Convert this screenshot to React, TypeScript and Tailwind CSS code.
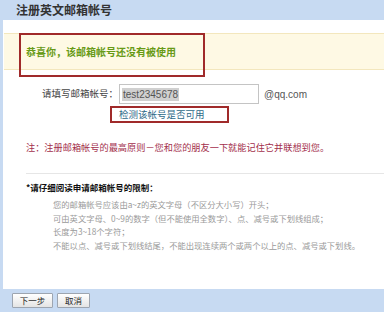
import React from 'react';

const cjk = '"Noto Sans CJK SC", "Liberation Sans", sans-serif';

const rules = [
  '您的邮箱帐号应该由a~z的英文字母（不区分大小写）开头；',
  '可由英文字母、0~9的数字（但不能使用全数字）、点、减号或下划线组成；',
  '长度为3~18个字符；',
  '不能以点、减号或下划线结尾，不能出现连续两个或两个以上的点、减号或下划线。',
];

export default function App() {
  return (
    <div className="w-[384px] h-[312px] flex flex-col bg-[#c7daf2] overflow-hidden" style={{ fontFamily: cjk }}>
      {/* header */}
      <div className="h-[20px] shrink-0 flex items-center pl-[16px] text-[12px] font-bold text-[#333]">
        注册英文邮箱帐号
      </div>

      {/* body */}
      <div className="flex-1 ml-[3px] bg-white flex flex-col pt-[13px]">
        <div className="relative h-[37px] ml-[1px] bg-[#fef9e4] border-y border-[#f3e7bd] flex items-center pl-[22px]">
          <span className="text-[10px] font-bold text-[#679a16] leading-none">恭喜你，该邮箱帐号还没有被使用</span>
          <div className="absolute left-[15px] -top-px w-[186px] h-[44px] border-2 border-[#a02a2a]" />
        </div>

        <div className="mt-[14px] flex items-center pl-[39px]">
          <span className="text-[9.5px] text-[#444] leading-none">请填写邮箱帐号：</span>
          <div className="ml-[1px] w-[140px] h-[20px] border border-[#c4c4c4] flex items-center pl-[2px]">
            <span className="text-[10px] leading-[13px] text-[#555] bg-[#d0d0d0] px-[1px]" style={{ fontFamily: '"Liberation Sans", sans-serif' }}>
              test2345678
            </span>
          </div>
          <span className="ml-[5px] text-[10px] text-[#555]" style={{ fontFamily: '"Liberation Sans", sans-serif' }}>@qq.com</span>
        </div>

        <div className="mt-[2px] ml-[107px] w-[119px] h-[17px] border-2 border-[#a02a2a] flex items-center pl-[7px]">
          <span className="text-[9.5px] text-[#2f6b88] leading-none">检测该帐号是否可用</span>
        </div>

        <div className="mt-[18px] ml-[23px] text-[9.2px] leading-[12px] text-[#a3304c]">
          注：注册邮箱帐号的最高原则－您和您的朋友一下就能记住它并联想到您。
        </div>

        <div className="mt-[20px] ml-[23px] h-px bg-[#e6e6e6]" />

        <div className="mt-[7px] ml-[23px] text-[8.5px] leading-[12px] font-bold text-[#111]">
          *请仔细阅读申请邮箱帐号的限制：
        </div>

        <div className="mt-[5px] ml-[50px] flex flex-col text-[8.3px] leading-[13.5px] text-[#9a9a9a]">
          {rules.map((r) => (
            <span key={r}>{r}</span>
          ))}
        </div>
      </div>

      {/* footer */}
      <div className="h-[23px] shrink-0 flex items-start pt-[4px] pl-[12px] gap-[4px]">
        <button className="w-[41px] h-[15px] border border-[#9da5b0] rounded-[1px] bg-gradient-to-b from-white to-[#e4e4e4] text-[8.5px] text-[#222] leading-none flex items-center justify-center">
          下一步
        </button>
        <button className="w-[33px] h-[15px] border border-[#9da5b0] rounded-[1px] bg-gradient-to-b from-white to-[#e4e4e4] text-[8.5px] text-[#222] leading-none flex items-center justify-center">
          取消
        </button>
      </div>
    </div>
  );
}
